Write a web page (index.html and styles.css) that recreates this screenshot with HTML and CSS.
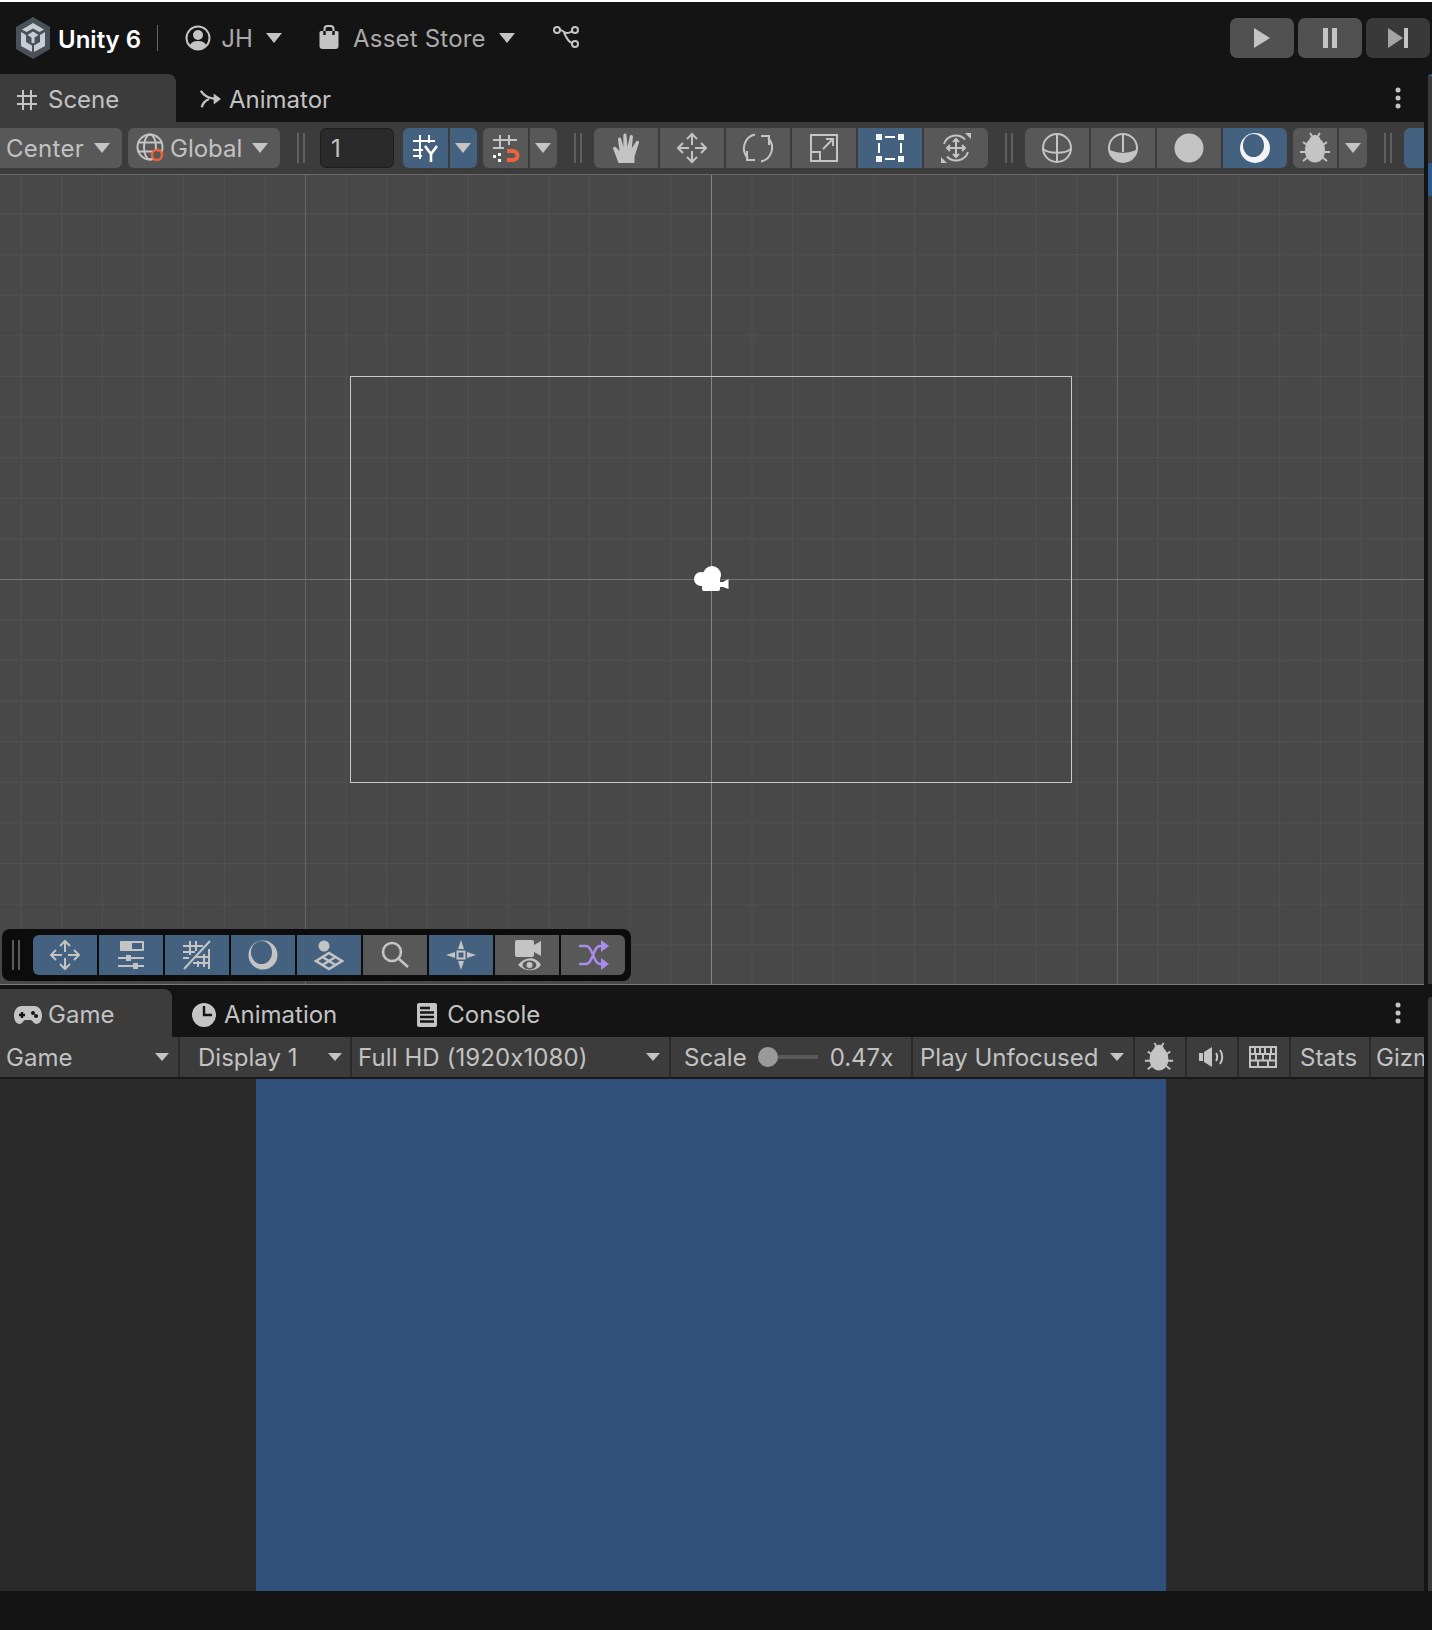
FILE: index.html
```html
<!DOCTYPE html>
<html lang="en">
<head>
<meta charset="utf-8">
<title>Unity 6</title>
<link rel="stylesheet" href="styles.css">
</head>
<body>
<div class="app">
  <header class="topbar">
    <svg class="logo" viewBox="0 0 34 42"><path class="logo-hex" d="M17 0 34 10V32L17 42 0 32V10Z"/><path class="logo-cube" d="M17 6 28 12.500 23.500 15 17 11.500 10.500 15 6 12.500ZM5 15 10 18V25L16 28.500V35L5 29ZM29 15 24 18V25L18 28.500V35L29 29ZM17 14.500 22.500 18 18.500 20.500V26H15.500V20.500L11.500 18Z"/></svg>
    <span class="brand">Unity 6</span>
    <span class="divider"></span>
    <svg class="ic-user" viewBox="0 0 26 26"><circle class="st" cx="13" cy="13" r="11.500"/><circle class="fl" cx="13" cy="10" r="5"/><path class="fl" d="M4.500 20.500C7 16.500 10 16 13 16s6 .5 8.500 4.500C19 24 16 25 13 25s-6-1-8.500-4.500Z"/></svg>
    <span class="label lb-top lb-jh">JH</span><i class="caret cr-jh"></i>
    <svg class="ic-bag" viewBox="0 0 20 24"><path class="fl" d="M2 6H18a1.500 1.500 0 0 1 1.500 1.500V21a3 3 0 0 1-3 3H3.500a3 3 0 0 1-3-3V7.500A1.500 1.500 0 0 1 2 6Z"/><path class="st" d="M5.500 6V4a3 3 0 0 1 3-3h3a3 3 0 0 1 3 3v2"/><path class="st-d" d="M5.500 6V10M14.500 6V10"/></svg>
    <span class="label lb-top lb-store">Asset Store</span><i class="caret cr-store"></i>
    <svg class="ic-nodes" viewBox="0 0 26 24"><g class="st"><circle cx="4" cy="5" r="3"/><circle cx="22" cy="5" r="3"/><circle cx="22" cy="19" r="3"/><path d="M7 5C10 5 11 8 14 8 16 8 17 7 19.500 6.500M11 7.500C13 12 15 17 19 18"/></g></svg>
    <div class="play">
      <button class="pb pb-on"><svg viewBox="0 0 20 20"><path class="fl" d="M2 0 18 10 2 20Z"/></svg></button>
      <button class="pb pb-on"><svg viewBox="0 0 20 20"><path class="fl" d="M3 0H8V20H3ZM12 0H17V20H12Z"/></svg></button>
      <button class="pb pb-off"><svg viewBox="0 0 20 20"><path class="fl-g" d="M0 0 15 10 0 20Z"/><path class="fl" d="M16 0H20V20H16Z"/></svg></button>
    </div>
  </header>

  <div class="main">
    <div class="panes">
      <nav class="tabs">
        <div class="tab tab-on tab-scene">
          <svg class="ic-hash" viewBox="0 0 20 20"><path class="st" d="M6 0V20M14 0V20M0 6H20M0 14H20"/></svg>
          <span class="label">Scene</span>
        </div>
        <div class="tab tab-anim">
          <svg class="ic-branch" viewBox="0 0 24 20"><path class="st st3" d="M2 1C5 6 9 9 20 10M3 19C4 15 6 12 11 10"/><path class="fl" d="M16 4 24 10 16 16Z"/></svg>
          <span class="label">Animator</span>
        </div>
        <svg class="kebab" viewBox="0 0 6 22"><circle cx="3" cy="3" r="2.500"/><circle cx="3" cy="11" r="2.500"/><circle cx="3" cy="19" r="2.500"/></svg>
      </nav>

      <div class="toolbar">
        <div class="btn drop drop-center"><span class="label lb-tool">Center</span><i class="caret"></i></div>
        <div class="btn drop drop-global">
          <svg class="ic-globe" viewBox="0 0 30 30"><g class="st"><circle cx="14" cy="14" r="12.500"/><ellipse cx="14" cy="14" rx="6" ry="12.500"/><path d="M2 9.500H26M2 18.500H26"/></g><circle class="or" cx="21" cy="22" r="5"/></svg>
          <span class="label lb-tool">Global</span><i class="caret"></i>
        </div>
        <span class="grip"></span>
        <div class="field"><span class="label lb-tool">1</span></div>
        <div class="seg seg-split">
          <div class="seg-btn sq blue"><svg class="ic" viewBox="0 0 32 32"><path class="st st-w" d="M10 3V27M19 3V11M3 9H25M3 18H13M3 24H12"/><path class="st st-w st3" d="M15 14 21 22 27 14M21 22V30"/></svg></div>
          <div class="seg-btn cr-btn blue"><i class="caret"></i></div>
        </div>
        <div class="seg seg-split">
          <div class="seg-btn sq"><svg class="ic" viewBox="0 0 32 32"><path class="st" d="M10 3V15M19 3V13M3 8H27M3 16H14"/><path class="fl-w" d="M8 21H11V24H8ZM8 27H11V30H8ZM3 23H6V26H3Z"/><path class="st-o" d="M17 19H23A4.500 4.500 0 0 1 23 28H17"/></svg></div>
          <div class="seg-btn cr-btn"><i class="caret"></i></div>
        </div>
        <span class="grip"></span>
        <div class="seg">
          <div class="seg-btn"><svg class="ic" viewBox="1 1 26 30"><path class="fl" d="M7 30 2 17c-.6-2 1.800-3 3-1.200L8 19 6.500 8c-.3-2 2.700-2.500 3-.5L11.500 15 11.500 4c0-2 3-2 3 0L15.500 15 17.500 5c.4-2 3.300-1.500 3 .5L19.500 16l4-6c1.200-1.700 3.500-.5 2.600 1.400L22 24v6Z"/></svg></div>
          <div class="seg-btn"><svg class="ic" viewBox="0 0 32 32"><path class="st" d="M16 2V30M2 16H30M11 7 16 2 21 7M11 25 16 30 21 25M7 11 2 16 7 21M25 11 30 16 25 21"/><rect class="hole" x="13" y="13" width="6" height="6"/></svg></div>
          <div class="seg-btn"><svg class="ic" viewBox="0 0 32 32"><path class="st" d="M13 2.500A14 14 0 0 0 6 26M5 19V28H13M19 29.500A14 14 0 0 0 26 6M27 13V4H19"/></svg></div>
          <div class="seg-btn"><svg class="ic" viewBox="0 0 32 32"><path class="st" d="M3 3H29V29H3ZM3 20H12V29M15 17 25 7M18 7H25V14"/></svg></div>
          <div class="seg-btn blue"><svg class="ic" viewBox="0 0 32 32"><path class="fl-w" d="M2 2H8V8H2ZM24 2H30V8H24ZM2 24H8V30H2ZM24 24H30V30H24Z"/><path class="st st-w" d="M11 5H21M11 27H21M5 11V21M27 11V21"/></svg></div>
          <div class="seg-btn"><svg class="ic" viewBox="0 0 32 32"><path class="st" d="M16 7V25M7 16H25M13 10 16 7 19 10M13 22 16 25 19 22M10 13 7 16 10 19M22 13 25 16 22 19M4 12A12.500 12.500 0 0 1 25 7.500M28 20A12.500 12.500 0 0 1 7 24.500"/><path class="fl" d="M31 1V7L25 1ZM1 31V25L7 31Z"/></svg></div>
        </div>
        <span class="grip"></span>
        <div class="seg">
          <div class="seg-btn"><svg class="ic" viewBox="0 0 32 32"><g class="st"><circle cx="16" cy="16" r="14"/><path d="M16 2V30M2 17C8 22 24 22 30 17"/></g></svg></div>
          <div class="seg-btn"><svg class="ic" viewBox="0 0 32 32"><circle class="st" cx="16" cy="16" r="14"/><path class="fl" d="M2 17C8 22 24 22 30 17 30 26 22 30 16 30S2 26 2 17Z"/><path class="st" d="M16 2V20"/></svg></div>
          <div class="seg-btn"><svg class="ic" viewBox="0 0 32 32"><circle class="fl" cx="16" cy="16" r="14.500"/></svg></div>
          <div class="seg-btn blue"><svg class="ic" viewBox="0 0 32 32"><circle class="fl-w" cx="16" cy="16" r="15"/><ellipse class="bl" cx="14.500" cy="13.500" rx="10.500" ry="11.500"/></svg></div>
        </div>
        <div class="seg seg-split">
          <div class="seg-btn bug-btn"><svg class="ic" viewBox="0 0 32 32"><path class="fl" d="M16 3C19 3 21 5 21.500 7.500 25 10 26 15 26 19 26 26 21 30.500 16 30.500S6 26 6 19C6 15 7 10 10.500 7.500 11 5 13 3 16 3Z"/><path class="st" d="M11 1 13 4M21 1 19 4M4 10 8 13M28 10 24 13M1 20H7M31 20H25M4 29 9 25M28 29 23 25"/></svg></div>
          <div class="seg-btn cr-btn2"><i class="caret"></i></div>
        </div>
        <span class="grip"></span>
        <div class="btn blue tail"></div>
      </div>

      <section class="scene">
        <span class="axis-v"></span>
        <span class="axis-h"></span>
        <div class="cam-rect"></div>
        <svg class="camera" viewBox="0 0 36 27"><circle cx="8" cy="14" r="7"/><circle cx="19" cy="10" r="9"/><path d="M9 14H27V24A2 2 0 0 1 25 26H11A2 2 0 0 1 9 24ZM27 17H30L35.500 14V24L30 22H27Z"/></svg>
        <div class="overlay">
          <span class="grip grip-ov"></span>
          <div class="seg">
            <div class="seg-btn blue"><svg class="ic" viewBox="0 0 32 32"><path class="st" d="M16 2V30M2 16H30M11 7 16 2 21 7M11 25 16 30 21 25M7 11 2 16 7 21M25 11 30 16 25 21"/><rect class="hole-b" x="13" y="13" width="6" height="6"/></svg></div>
            <div class="seg-btn blue"><svg class="ic" viewBox="0 0 32 32"><path class="fl" d="M6 2H28a1 1 0 0 1 1 1V11a1 1 0 0 1-1 1H6a1 1 0 0 1-1-1V3a1 1 0 0 1 1-1Z"/><rect class="bl" x="17" y="4" width="10" height="6"/><path class="st" d="M3 19H29M3 27H29"/><path class="fl" d="M11 16H16V22H11ZM18 24H23V30H18Z"/></svg></div>
            <div class="seg-btn blue"><svg class="ic" viewBox="0 0 32 32"><path class="st" d="M9 2V16M15 2V12M2 7H22M2 13H14M2 19H8M3 30 29 2"/><path class="st" d="M28 10V30M23 15V28M17 22V28M14 18H28M12 24H28"/></svg></div>
            <div class="seg-btn blue"><svg class="ic" viewBox="0 0 32 32"><circle class="fl" cx="16" cy="16" r="14.500"/><ellipse class="bl" cx="14.500" cy="13.500" rx="10.500" ry="11.500"/></svg></div>
            <div class="seg-btn blue"><svg class="ic" viewBox="0 0 32 32"><circle class="fl" cx="11" cy="7" r="5.500"/><path class="st st3" d="M3 22 16 14 29 22 16 30ZM9.500 18 22.500 26M22.500 18 9.500 26"/></svg></div>
            <div class="seg-btn"><svg class="ic" viewBox="0 0 32 32"><circle class="st st3" cx="13" cy="13" r="9"/><path class="st st3" d="M20 20 29 28"/></svg></div>
            <div class="seg-btn blue"><svg class="ic" viewBox="0 0 32 32"><path class="fl" d="M16 1 19 10H13ZM16 31 13 22H19ZM1 16 10 13V19ZM31 16 22 19V13Z"/><rect class="st" x="12.500" y="12.500" width="7" height="7"/></svg></div>
            <div class="seg-btn"><svg class="ic" viewBox="0 0 32 32"><path class="fl" d="M6 1H21a2 2 0 0 1 2 2V6L30 2V17L23 13V16a2 2 0 0 1-2 2H6a2 2 0 0 1-2-2V3a2 2 0 0 1 2-2Z"/><path class="fl" d="M7 26C14 17 25 17 30 26 25 33 14 33 7 26Z"/><ellipse class="hole" cx="18.500" cy="26" rx="7" ry="4.500"/><circle class="fl" cx="18.500" cy="26" r="3"/></svg></div>
            <div class="seg-btn"><svg class="ic" viewBox="0 0 32 32"><path class="st-p" d="M2 7H9C16 7 16 25 23 25H27M2 25H9C16 25 16 7 23 7H27"/><path class="fl-p" d="M24 1 32 7 24 13ZM24 19 32 25 24 31Z"/></svg></div>
          </div>
        </div>
      </section>

      <nav class="tabs tabs-game">
        <div class="tab tab-on tab-game">
          <svg class="ic-pad" viewBox="0 0 28 18"><path class="fl" d="M8 0H20C25 0 28 4 28 10 28 15 25 18 22.500 18 20 18 19 15 17 14H11C9 15 8 18 5.500 18 3 18 0 15 0 10 0 4 3 0 8 0Z"/><path class="st-d" d="M8 6V12M5 9H11"/><circle class="dk" cx="19" cy="7" r="2"/><circle class="dk" cx="22" cy="10" r="2"/></svg>
          <span class="label">Game</span>
        </div>
        <div class="tab tab-animation">
          <svg class="ic-clock" viewBox="0 0 24 24"><circle class="fl" cx="12" cy="12" r="12"/><path class="st-d" d="M12 3V12H20"/></svg>
          <span class="label">Animation</span>
        </div>
        <div class="tab tab-console">
          <svg class="ic-doc" viewBox="0 0 20 24"><rect class="fl" width="20" height="24" rx="2"/><path class="st-d" d="M3 5H13M3 9.500H17M3 14H17M3 18.500H17"/></svg>
          <span class="label">Console</span>
        </div>
        <svg class="kebab" viewBox="0 0 6 22"><circle cx="3" cy="3" r="2.500"/><circle cx="3" cy="11" r="2.500"/><circle cx="3" cy="19" r="2.500"/></svg>
      </nav>

      <div class="gamebar">
        <div class="gi gi-sb"><span class="label">Game</span><i class="caret caret-sm"></i></div>
        <div class="gi gi-sb gi-display"><span class="label">Display 1</span><i class="caret caret-sm"></i></div>
        <div class="gi gi-sb"><span class="label lb-hd">Full HD (1920x1080)</span><i class="caret caret-sm"></i></div>
        <div class="gi gi-scale"><span class="label">Scale</span><i class="thumb"></i><i class="track"></i><span class="label">0.47x</span></div>
        <div class="gi gi-sb gi-unf"><span class="label">Play Unfocused</span><i class="caret caret-sm"></i></div>
        <div class="gi gi-c"><svg class="ic" viewBox="0 0 32 32"><path class="fl" d="M16 3C19 3 21 5 21.500 7.500 25 10 26 15 26 19 26 26 21 30.500 16 30.500S6 26 6 19C6 15 7 10 10.500 7.500 11 5 13 3 16 3Z"/><path class="st" d="M11 1 13 4M21 1 19 4M4 10 8 13M28 10 24 13M1 20H7M31 20H25M4 29 9 25M28 29 23 25"/></svg></div>
        <div class="gi gi-c"><svg class="ic-sound" viewBox="0 0 26 20"><path class="fl" d="M0 6H4V14H0ZM5 5 13 0V20L5 15Z"/><path class="st" d="M17 6C18.500 8 18.500 12 17 14M21 3C24 7 24 13 21 17"/></svg></div>
        <div class="gi gi-c"><svg class="ic-kbd" viewBox="0 0 28 22"><path class="st" d="M1 1H27V21H1ZM1 8H27M1 14.500H27M6 1V8M11 1V8M16 1V8M22 1V8M7 8V14.500M14 8V14.500M21 8V14.500M9 14.500V21M19 14.500V21"/></svg></div>
        <div class="gi gi-stats"><span class="label">Stats</span></div>
        <div class="gi gi-clip"><span class="label">Gizmos</span></div>
      </div>
      <div class="gamebar-gap"></div>

      <section class="game"><div class="game-view"></div></section>
    </div>
    <aside class="strip">
      <div class="strip-top"><div class="strip-blue"></div></div>
      <div class="strip-bot"></div>
    </aside>
  </div>
  <footer class="status"></footer>
</div>
</body>
</html>
```

FILE: styles.css
```css
* { box-sizing: border-box; }
html, body { margin: 0; padding: 0; background: #141414; }
body { width: 1432px; height: 1630px; overflow: hidden; font-family: Inter, "Liberation Sans", sans-serif; font-feature-settings: "calt" 0; color: #c4c4c4; }
.app { display: flex; flex-direction: column; height: 1630px; border-top: 2px solid #fff; }
i { display: block; }
svg { display: block; flex: none; }
button { border: 0; padding: 0; }

.label { font-size: 24px; line-height: 28px; white-space: nowrap; color: #c2c2c2; }
.st { fill: none; stroke: #c4c4c4; stroke-width: 2; }
.st3 { stroke-width: 2.600; }
.st-w { stroke: #fff; }
.fl { fill: #c4c4c4; }
.fl-g { fill: #a4a4a4; }
.fl-w { fill: #f4f4f4; }
.bl { fill: #44617f; }
.dk { fill: #141414; }
.or { fill: #585858; stroke: #f0633a; stroke-width: 2.400; }
.st-o { fill: none; stroke: #f0633a; stroke-width: 4; }
.st-d { fill: none; stroke: #141414; stroke-width: 2.400; }
.st-p { fill: none; stroke: #a98bea; stroke-width: 2.400; }
.fl-p { fill: #a98bea; }
.hole { fill: #585858; }
.hole-b { fill: #44617f; }

.caret { width: 0; height: 0; flex: none; border-left: 8px solid transparent; border-right: 8px solid transparent; border-top: 10px solid #c4c4c4; }
.caret-sm { border-left-width: 7px; border-right-width: 7px; border-top-width: 8px; }

/* top bar */
.topbar { height: 72px; flex: none; display: flex; align-items: center; padding: 0 2px 1px 16px; }
.logo { width: 34px; height: 42px; }
.logo-hex { fill: #4a5058; }
.logo-cube { fill: #c9ccd2; }
.brand { margin: 4px 0 0 8px; font-size: 24px; font-weight: 600; color: #fff; white-space: nowrap; }
.divider { width: 1px; height: 26px; margin-left: 16px; background: #666; }
.ic-user { width: 26px; height: 26px; margin-left: 27px; }
.lb-top { margin-top: 2px; letter-spacing: .2px; color: #aaa; }
.lb-jh { margin-left: 10px; }
.cr-jh { margin-left: 13px; }
.ic-bag { width: 20px; height: 24px; margin-left: 37px; margin-top: -2px; }
.lb-store { margin-left: 14px; }
.cr-store { margin-left: 13px; }
.ic-nodes { width: 26px; height: 24px; margin-left: 38px; margin-top: -2px; }
.play { margin-left: auto; display: flex; gap: 4px; }
.pb { width: 64px; height: 40px; border-radius: 7px; display: flex; align-items: center; justify-content: center; }
.pb svg { width: 20px; height: 20px; }
.pb-on { background: #515151; }
.pb-off { background: #393939; }

.main { flex: 1; display: flex; min-height: 0; }
.panes { width: 1424px; flex: none; display: flex; flex-direction: column; }

/* tabs */
.tabs { height: 48px; flex: none; display: flex; align-items: flex-end; position: relative; }
.tab { height: 48px; display: flex; align-items: center; padding-top: 4px; }
.tab-on { background: #3c3c3c; border-radius: 0 8px 0 0; }
.tab-scene { width: 176px; padding-left: 17px; }
.tab-anim { padding-left: 23px; }
.ic-hash { width: 20px; height: 20px; margin-right: 11px; }
.ic-branch { width: 22px; height: 20px; margin-right: 8px; margin-top: -2px; }
.kebab { position: absolute; right: 23px; top: 13px; width: 6px; height: 22px; fill: #c4c4c4; }

/* main toolbar */
.toolbar { height: 53px; flex: none; display: flex; gap: 6px; padding-top: 6px; background: #3c3c3c; border-bottom: 1px solid #6c6c6c; overflow: hidden; }
.toolbar > * { flex: none; }
.lb-tool { margin-top: 2px; }
.btn { height: 40px; background: #585858; border-radius: 6px; display: flex; align-items: center; }
.drop-center { width: 122px; border-radius: 0 6px 6px 0; padding: 0 12px 0 6px; justify-content: space-between; }
.drop-center .label { letter-spacing: .3px; }
.drop-global { width: 152px; padding: 0 12px 0 8px; }
.ic-globe { width: 30px; height: 30px; margin-right: 4px; }
.drop-global .caret { margin-left: auto; }
.grip { width: 8px; height: 30px; margin: 5px 6px 0 11px; border-left: 2px solid #606060; border-right: 2px solid #606060; }
.field { width: 74px; height: 40px; margin: 0 3px; background: #2a2a2a; border: 1px solid #1d1d1d; border-radius: 6px; display: flex; align-items: center; padding-left: 10px; }
.seg { display: flex; gap: 2px; }
.seg-btn { width: 64px; height: 40px; background: #585858; display: flex; align-items: center; justify-content: center; }
.seg-btn:first-child { border-radius: 6px 0 0 6px; }
.seg-btn:last-child { border-radius: 0 6px 6px 0; }
.blue { background: #44617f; }
.ic { width: 32px; height: 32px; }
.sq { width: 45px; }
.cr-btn { width: 27px; padding-right: 2px; }
.bug-btn { width: 44px; }
.cr-btn2 { width: 28px; }
.tail { width: 60px; border-radius: 6px 0 0 6px; }

/* scene */
.scene { position: relative; height: 810px; flex: none; overflow: hidden; border-bottom: 1px solid #7c7c7c;
  background-color: #484848;
  background-image:
    linear-gradient(to right, #646464 1px, transparent 1px),
    linear-gradient(to bottom, #646464 1px, transparent 1px),
    linear-gradient(to right, #505050 1px, transparent 1px),
    linear-gradient(to bottom, #505050 1px, transparent 1px);
  background-size: 406px 406px, 406px 406px, 40.6px 40.6px, 40.6px 40.6px;
  background-position: 305px 0, 0 404px, 20.800px 0, 0 38.600px; }
.axis-v { position: absolute; left: 711px; top: 0; width: 1px; height: 100%; background: #858585; }
.axis-h { position: absolute; left: 0; top: 404px; width: 100%; height: 1px; background: #757575; }
.cam-rect { position: absolute; left: 350px; top: 201px; width: 722px; height: 407px; border: 1px solid #c8c8c8; }
.camera { position: absolute; left: 693px; top: 390px; width: 36px; height: 27px; fill: #fff; }
.overlay { position: absolute; left: 2px; top: 754px; width: 629px; height: 52px; display: flex; align-items: center; background: #0c0c0c; border-radius: 8px; }
.grip-ov { margin: 0 13px 0 10px; height: 30px; width: 8px; border-color: #5c5c5c; }

/* game */
.tabs-game { height: 52px; }
.tab-game { width: 172px; height: 48px; padding-left: 14px; }
.tab-animation { height: 48px; padding-left: 20px; }
.tab-console { height: 48px; padding-left: 80px; }
.ic-pad { width: 28px; height: 18px; margin-right: 6px; }
.ic-clock { width: 24px; height: 24px; margin-right: 8px; }
.ic-doc { width: 20px; height: 24px; margin-right: 10px; }
.tabs-game .kebab { top: 17px; }

.gamebar { height: 40px; flex: none; display: grid; grid-template-columns: 178px 170px 317px 240px 220px 50px 50px 50px 78px 1fr; gap: 2px; background: #2a2a2a; overflow: hidden; }
.gi { background: #3c3c3c; display: flex; align-items: center; min-width: 0; overflow: hidden; }
.gi .label { margin-top: 2px; }
.gi-sb { justify-content: space-between; padding: 0 9px 0 6px; }
.gi-display { padding-left: 18px; padding-right: 8px; }
.gi-unf { padding-left: 7px; }
.lb-hd { letter-spacing: .1px; }
.gi-c { justify-content: center; }
.gi-c .ic { width: 30px; height: 30px; margin-left: -2px; }
.gi-stats { padding-left: 9px; }
.gi-clip { padding-left: 5px; }
.gi-scale { padding-left: 13px; }
.thumb { width: 20px; height: 20px; margin-left: 11px; border-radius: 50%; background: #9a9a9a; }
.track { width: 40px; height: 4px; margin-right: 12px; background: #5a5a5a; }
.ic-sound { width: 26px; height: 20px; }
.ic-kbd { width: 28px; height: 22px; margin-left: -2px; }
.gamebar-gap { height: 2px; flex: none; background: #1a1a1a; }

.game { flex: 1; background: #2a2a2a; display: flex; justify-content: center; }
.game-view { width: 910px; height: 100%; margin-right: 2px; background: #304f7a; }

/* right strip */
.strip { flex: 1; padding-left: 4px; display: flex; flex-direction: column; gap: 13px; }
.strip-top { height: 910px; background: #3a3a3a; border-radius: 4px 0 0 0; border-top: 2px solid #2c5f8f; position: relative; }
.strip-blue { position: absolute; left: 0; right: 0; top: 87px; height: 33px; background: #2a5a8a; }
.strip-bot { flex: 1; background: #3a3a3a; border-radius: 4px 0 0 0; }

.status { height: 39px; flex: none; background: #141414; }
```
